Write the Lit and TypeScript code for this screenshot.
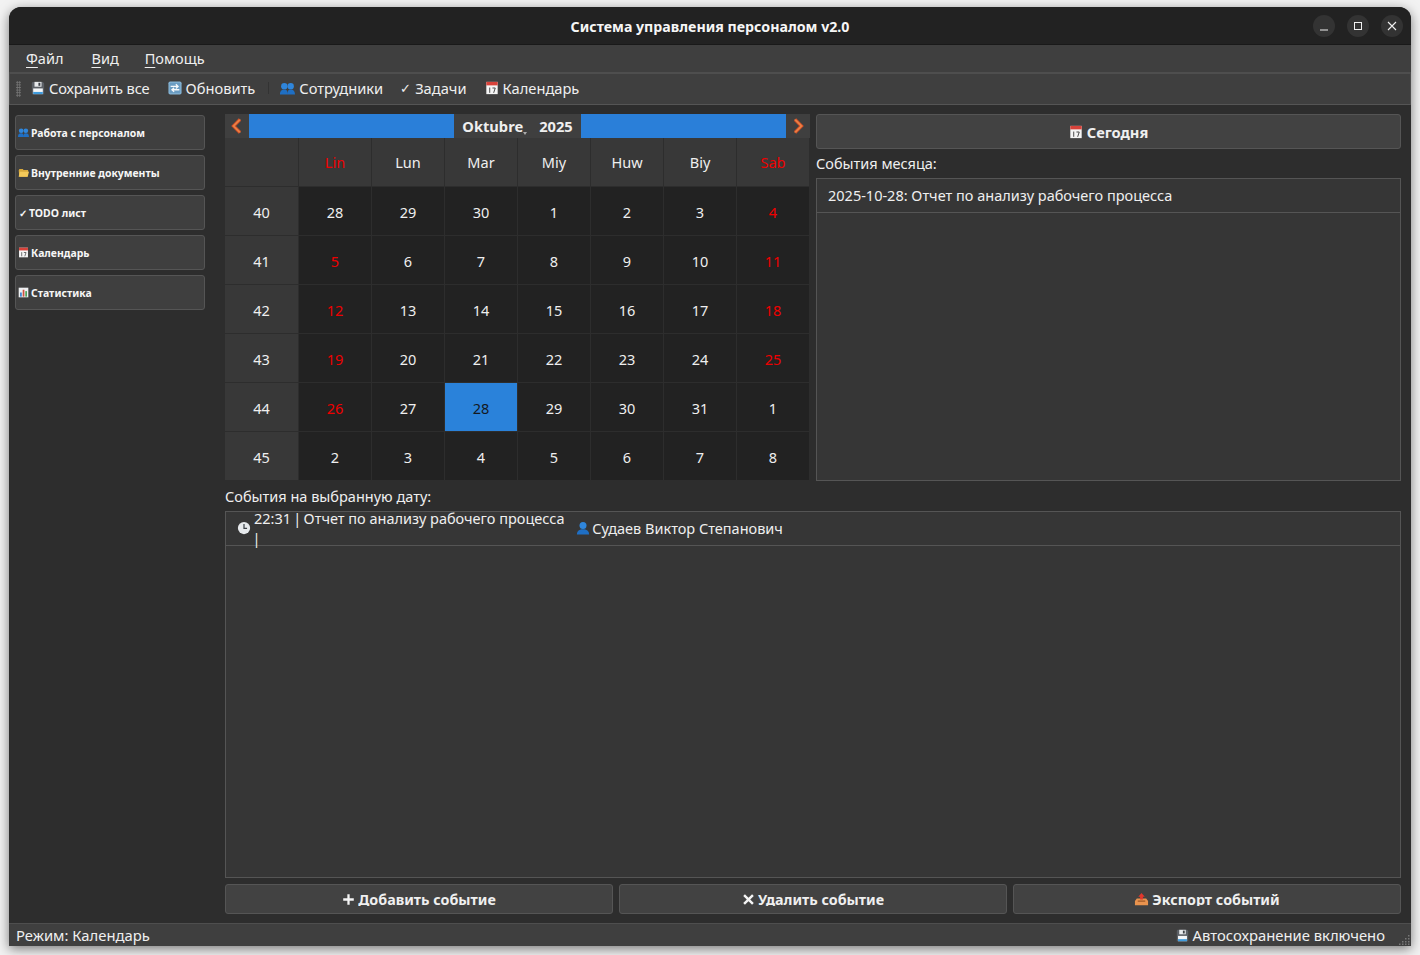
import { LitElement, html, css, svg } from 'lit';
import { customElement } from 'lit/decorators.js';

const icon = (body: unknown, size = 14, cls = '') =>
  html`<svg class="ico ${cls}" width=${size} height=${size} viewBox="0 0 16 16">${body}</svg>`;

const saveIcon = (size = 14) => icon(svg`
  <path d="M1 2 2 1h11.5L15 2.5V15H1z" fill="#5c6066"/>
  <rect x="2.5" y="8.5" width="11" height="6.5" fill="#f4f6f8"/>
  <rect x="2.5" y="12.5" width="11" height="2.5" fill="#3f9bdc"/>
  <rect x="4" y="1" width="8" height="5.5" fill="#e8eaec"/>
  <rect x="8.5" y="2" width="2.2" height="3.5" fill="#3c4046"/>`, size);

const refreshIcon = (size = 14) => icon(svg`
  <rect x="0.5" y="0.5" width="15" height="15" rx="2" fill="#86b4d4"/>
  <rect x="2" y="2" width="12" height="12" fill="#6a9cc2"/>
  <path d="M3 6.2h8M9 3.8l2.5 2.4L9 8.6" fill="none" stroke="#f5f8fa" stroke-width="1.5"/>
  <path d="M13 10H5M7 7.8 4.5 10 7 12.4" fill="none" stroke="#f5f8fa" stroke-width="1.5"/>`, size);

const peopleIcon = (size = 15) => icon(svg`
  <circle cx="4.6" cy="5.5" r="3.4" fill="#2f86dc"/>
  <circle cx="11.4" cy="5.5" r="3.4" fill="#2f86dc"/>
  <path d="M0 14.5c0-4 1.6-5.5 4.6-5.5S8 10.5 8 14.5zM8 14.5c0-4 .6-5.5 3.4-5.5s4.6 1.5 4.6 5.5z" fill="#1f6fc4"/>`, size);

const calendarIcon = (size = 14) => icon(svg`
  <rect x="1.5" y="1" width="13" height="14" fill="#f5f5f5"/>
  <rect x="1.5" y="1" width="13" height="4" fill="#d8423a"/>
  <path d="M5.4 7.5v6M8.5 8h3.2l-1.8 5.5" fill="none" stroke="#444" stroke-width="1.1"/>`, size);

const folderIcon = (size = 11) => icon(svg`
  <path d="M1 5 2 3h5l1 1.5h6.5L15 6 14 14H2z" fill="#d9a93c"/>
  <path d="M2.5 7H16l-2 7H1z" fill="#f4c95a"/>`, size);

const chartIcon = (size = 11) => icon(svg`
  <rect x="1" y="1" width="14" height="14" fill="#eef0f2"/>
  <rect x="3" y="8" width="2.5" height="6" fill="#3a82cf"/>
  <rect x="6.8" y="4" width="2.5" height="10" fill="#d0503f"/>
  <rect x="10.6" y="6" width="2.5" height="8" fill="#4da35a"/>`, size);

const clockIcon = () => icon(svg`
  <circle cx="8" cy="8" r="7" fill="#e6e9ec"/>
  <path d="M8 3.5V8.5H11.5" fill="none" stroke="#3b4046" stroke-width="1.4"/>`, 14);

const personIcon = () => icon(svg`
  <circle cx="8" cy="5" r="4" fill="#2f86dc"/>
  <path d="M1 15.5c0-4 3-6 7-6s7 2 7 6z" fill="#1f6fc4"/>`, 14);

const exportIcon = () => icon(svg`
  <path d="M1 9.5 3 7h10l2 2.5V14H1z" fill="#e8934e"/>
  <rect x="4" y="9" width="8" height="1.5" fill="#a85f2a"/>
  <path d="M8 1 11.5 5H9.5V8h-3V5H4.5z" fill="#e2372c"/>`, 15);

const plusIcon = () => icon(svg`<path d="M6.6 1.5h2.8v5.1h5.1v2.8H9.4v5.1H6.6V9.4H1.5V6.6h5.1z" fill="#f4f4f4"/>`, 13);
const crossIcon = () => icon(svg`<path d="M3.6 1.5 8 5.9l4.4-4.4 2.1 2.1L10.1 8l4.4 4.4-2.1 2.1L8 10.1l-4.4 4.4-2.1-2.1L5.9 8 1.5 3.6z" fill="#f4f4f4"/>`, 13);

const chevron = (d: string) => html`<svg width="14" height="16" viewBox="0 0 14 16">
  <path d=${d} fill="none" stroke="#d9562a" stroke-width="3.2"/>
  <path d=${d} fill="none" stroke="#f5a860" stroke-width="1"/>
</svg>`;

const sideItems = [
  { glyph: peopleIcon(11), label: 'Работа с персоналом' },
  { glyph: folderIcon(), label: 'Внутренние документы' },
  { glyph: html`<span class="chk">✓</span>`, label: 'TODO лист' },
  { glyph: calendarIcon(11), label: 'Календарь' },
  { glyph: chartIcon(), label: 'Статистика' },
];

const dayNames = ['Lin', 'Lun', 'Mar', 'Miy', 'Huw', 'Biy', 'Sab'];
const weeks = [
  { n: 40, days: [28, 29, 30, 1, 2, 3, 4] },
  { n: 41, days: [5, 6, 7, 8, 9, 10, 11] },
  { n: 42, days: [12, 13, 14, 15, 16, 17, 18] },
  { n: 43, days: [19, 20, 21, 22, 23, 24, 25] },
  { n: 44, days: [26, 27, 28, 29, 30, 31, 1] },
  { n: 45, days: [2, 3, 4, 5, 6, 7, 8] },
];

// red only for weekends that belong to the shown month
const isOff = (wi: number, i: number) =>
  (i === 0 && wi >= 1 && wi <= 4) || (i === 6 && wi <= 3);

@customElement('app-root')
export class AppRoot extends LitElement {
  static styles = css`
    :host {
      display: block;
      box-sizing: border-box;
      height: 955px;
      padding: 7px 9px 9px;
      background: #f2f2f2;
      font-family: 'Noto Sans', 'Open Sans', sans-serif;
      font-size: 14.5px;
      color: #efefef;
      overflow: hidden;
    }
    .ico { flex: none; display: block; }
    .window {
      height: 939px;
      display: flex;
      flex-direction: column;
      background: #2d2d2d;
      border-radius: 12px 12px 0 0;
      box-shadow: 0 3px 12px rgba(0, 0, 0, 0.5);
      overflow: hidden;
    }

    .titlebar {
      flex: none;
      height: 37px;
      display: flex;
      align-items: center;
      justify-content: flex-end;
      gap: 10px;
      padding-right: 7px;
      background: #222;
      border-bottom: 1px solid #191919;
      position: relative;
    }
    .title {
      position: absolute;
      left: 0;
      right: 0;
      padding-top: 2px;
      text-align: center;
      font-weight: 700;
      font-size: 14.2px;
      color: #f6f6f6;
    }
    .winbtn {
      width: 22px;
      height: 22px;
      margin: 0 1px;
      border-radius: 50%;
      background: #333;
      display: flex;
      align-items: center;
      justify-content: center;
    }

    .menubar {
      flex: none;
      height: 27px;
      display: flex;
      align-items: center;
      gap: 26px;
      padding: 0 0 2px 17px;
      background: #3f3f3f;
      box-sizing: border-box;
    }
    .menubar u { text-underline-offset: 3px; text-decoration-thickness: 1px; }
    .menubar .first { margin-right: 2px; }

    .toolbar {
      flex: none;
      height: 33px;
      box-sizing: border-box;
      display: flex;
      align-items: center;
      padding: 0 0 2px 6px;
      background: #3f3f3f;
      border-top: 2px solid #4e4e4e;
      border-bottom: 1px solid #555;
      border-left: 1px solid #4e4e4e;
      border-right: 1px solid #4e4e4e;
      font-size: 14.67px;
    }
    .grip {
      width: 5px;
      height: 16px;
      margin: 2px 10px 0 0;
      background-image: radial-gradient(#777 0.8px, transparent 1px);
      background-size: 2.5px 2.6px;
    }
    .tool { display: flex; align-items: center; gap: 4px; margin-right: 17px; }
    .tool.wide { margin-right: 18px; }
    .tool.tight { letter-spacing: -0.15px; }
    .tool .chk { font-size: 13px; width: 11px; }
    .sep { width: 1px; height: 12px; background: #333; margin: 0 11px 0 -4px; }

    .main { flex: 1; min-height: 0; display: flex; padding: 9px 10px 9px 6px; gap: 20px; }

    .sidebar { flex: none; width: 190px; margin-top: 1px; display: flex; flex-direction: column; gap: 5px; }
    .side-btn {
      height: 35px;
      box-sizing: border-box;
      display: flex;
      align-items: center;
      gap: 2px;
      padding-left: 2px;
      border: 1px solid #555;
      border-radius: 3px;
      background: #3f3f3f;
      font-size: 10.45px;
      font-weight: 700;
      color: #f6f6f6;
    }
    .side-btn .chk { font-size: 10px; width: 9px; text-align: center; }

    .content { flex: 1; min-width: 0; display: flex; flex-direction: column; }
    .top { flex: none; display: grid; grid-template-columns: 585px 585px; gap: 6px; }

    .nav { height: 24px; display: flex; align-items: stretch; }
    .nav-btn {
      width: 24px;
      background: #3f3f3f;
      display: flex;
      align-items: center;
      justify-content: center;
    }
    .nav-fill { flex: 1; background: #2a7fd9; }
    .nav-mid {
      width: 127px;
      background: #3f3f3f;
      display: flex;
      align-items: center;
      justify-content: center;
      gap: 16px;
      font-weight: 700;
      font-size: 14.67px;
      position: relative;
    }
    .drop {
      position: absolute;
      left: 69px;
      bottom: 3px;
      width: 0;
      height: 0;
      border: 2.5px solid transparent;
      border-top: 3px solid #aaa;
      border-bottom: 0;
    }

    .grid {
      display: grid;
      grid-template-columns: 74px repeat(7, 73px);
      grid-template-rows: repeat(7, 49px);
    }
    .cell {
      box-sizing: border-box;
      display: flex;
      align-items: center;
      justify-content: center;
      padding-top: 2px;
      background: #222;
      border-right: 1px solid #2d2d2d;
      border-bottom: 1px solid #2d2d2d;
    }
    .cell.head { background: #383838; padding-top: 0; }
    .cell.week { background: #383838; }
    .cell.off { color: #ef0000; }
    .cell.sel { background: #2a82da; color: #14191f; }

    .side-right { display: flex; flex-direction: column; }
    .today {
      height: 35px;
      box-sizing: border-box;
      display: flex;
      align-items: center;
      justify-content: center;
      gap: 4px;
      border: 1px solid #555;
      border-radius: 3px;
      background: #424242;
      font-weight: 700;
      font-size: 14.67px;
    }
    .label { height: 29px; box-sizing: border-box; padding-bottom: 2px; display: flex; align-items: center; }
    .list {
      flex: 1;
      min-height: 0;
      box-sizing: border-box;
      border: 1px solid #555;
      background: #363636;
    }
    .row {
      height: 34px;
      box-sizing: border-box;
      display: flex;
      align-items: center;
      padding: 0 0 1px 11px;
      border-bottom: 1px solid #555;
    }
    .row .ico { margin-right: 3px; }
    .row .ico.person { margin: 0 2px 0 3px; }
    .pipe { margin: 0 -1.5px; }
    .events { flex: 1; min-height: 0; display: flex; flex-direction: column; }
    .events .label { height: 30px; padding-bottom: 1px; }
    .actions { flex: none; display: grid; grid-template-columns: repeat(3, 1fr); gap: 6px; margin-top: 6px; }
    .action {
      height: 30px;
      box-sizing: border-box;
      display: flex;
      align-items: center;
      justify-content: center;
      gap: 3px;
      border: 1px solid #555;
      border-radius: 3px;
      background: #424242;
      font-weight: 700;
      font-size: 14.3px;
    }
    /* descenders are cut off in these buttons */
    .action span { display: block; height: 14px; line-height: 15px; overflow: hidden; }

    .statusbar {
      flex: none;
      height: 23px;
      box-sizing: border-box;
      display: flex;
      align-items: center;
      justify-content: space-between;
      padding: 0 26px 0 7px;
      background: #3f3f3f;
      border-top: 1px solid #4e4e4e;
      font-size: 14.8px;
      position: relative;
    }
    .status-right { display: flex; align-items: center; gap: 4px; }
    .sizegrip {
      position: absolute;
      right: 1px;
      bottom: 1px;
      width: 11px;
      height: 11px;
    }
  `;

  render() {
    return html`
      <div class="window">
        <div class="titlebar">
          <div class="title">Система управления персоналом v2.0</div>
          <div class="winbtn"><svg width="10" height="10" viewBox="0 0 10 10"><path d="M1 9h8" stroke="#f0f0f0" stroke-width="1"/></svg></div>
          <div class="winbtn"><svg width="10" height="10" viewBox="0 0 10 10"><rect x="1.5" y="1.5" width="7" height="7" fill="none" stroke="#f0f0f0"/></svg></div>
          <div class="winbtn"><svg width="10" height="10" viewBox="0 0 10 10"><path d="M1 1l8 8M9 1l-8 8" stroke="#f0f0f0" stroke-width="1.1"/></svg></div>
        </div>

        <div class="menubar">
          <span class="first"><u>Ф</u>айл</span>
          <span><u>В</u>ид</span>
          <span><u>П</u>омощь</span>
        </div>

        <div class="toolbar">
          <div class="grip"></div>
          <div class="tool wide tight">${saveIcon()}<span>Сохранить все</span></div>
          <div class="tool">${refreshIcon()}<span>Обновить</span></div>
          <div class="sep"></div>
          <div class="tool">${peopleIcon()}<span>Сотрудники</span></div>
          <div class="tool wide"><span class="chk">✓</span><span>Задачи</span></div>
          <div class="tool">${calendarIcon()}<span>Календарь</span></div>
        </div>

        <div class="main">
          <div class="sidebar">
            ${sideItems.map((s) => html`<div class="side-btn">${s.glyph}<span>${s.label}</span></div>`)}
          </div>

          <div class="content">
            <div class="top">
              <div>
                <div class="nav">
                  <div class="nav-btn">${chevron('M10 1.5 3.5 8l6.5 6.5')}</div>
                  <div class="nav-fill"></div>
                  <div class="nav-mid"><span>Oktubre</span><span>2025</span><i class="drop"></i></div>
                  <div class="nav-fill"></div>
                  <div class="nav-btn">${chevron('M4 1.5 10.5 8 4 14.5')}</div>
                </div>
                <div class="grid">
                  <div class="cell head"></div>
                  ${dayNames.map((d, i) => html`<div class="cell head ${i === 0 || i === 6 ? 'off' : ''}">${d}</div>`)}
                  ${weeks.map((w, wi) => html`
                    <div class="cell week">${w.n}</div>
                    ${w.days.map((d, i) => html`<div class="cell ${isOff(wi, i) ? 'off' : ''} ${wi === 4 && i === 2 ? 'sel' : ''}">${d}</div>`)}
                  `)}
                </div>
              </div>

              <div class="side-right">
                <div class="today">${calendarIcon()}<span>Сегодня</span></div>
                <div class="label">События месяца:</div>
                <div class="list"><div class="row">2025-10-28: Отчет по анализу рабочего процесса</div></div>
              </div>
            </div>

            <div class="events">
              <div class="label">События на выбранную дату:</div>
              <div class="list">
                <div class="row">${clockIcon()}<span>22:31 <span class="pipe">|</span> Отчет по анализу рабочего процесса <span class="pipe">|</span></span>
                  ${icon(svg`<circle cx="8" cy="5" r="4" fill="#2f86dc"/><path d="M1 15.5c0-4 3-6 7-6s7 2 7 6z" fill="#1f6fc4"/>`, 14, 'person')}<span>Судаев Виктор Степанович</span></div>
              </div>
            </div>

            <div class="actions">
              <div class="action">${plusIcon()}<span>Добавить событие</span></div>
              <div class="action">${crossIcon()}<span>Удалить событие</span></div>
              <div class="action">${exportIcon()}<span>Экспорт событий</span></div>
            </div>
          </div>
        </div>

        <div class="statusbar">
          <span>Режим: Календарь</span>
          <span class="status-right">${saveIcon(13)}<span>Автосохранение включено</span></span>
          <svg class="sizegrip" viewBox="0 0 11 11" fill="#777">
            <rect x="9" y="1" width="1.5" height="1.5"/>
            <rect x="6" y="4" width="1.5" height="1.5"/><rect x="9" y="4" width="1.5" height="1.5"/>
            <rect x="3" y="7" width="1.5" height="1.5"/><rect x="6" y="7" width="1.5" height="1.5"/><rect x="9" y="7" width="1.5" height="1.5"/>
            <rect x="0" y="9.5" width="1.5" height="1.5"/><rect x="3" y="9.5" width="1.5" height="1.5"/><rect x="6" y="9.5" width="1.5" height="1.5"/><rect x="9" y="9.5" width="1.5" height="1.5"/>
          </svg>
        </div>
      </div>
    `;
  }
}
